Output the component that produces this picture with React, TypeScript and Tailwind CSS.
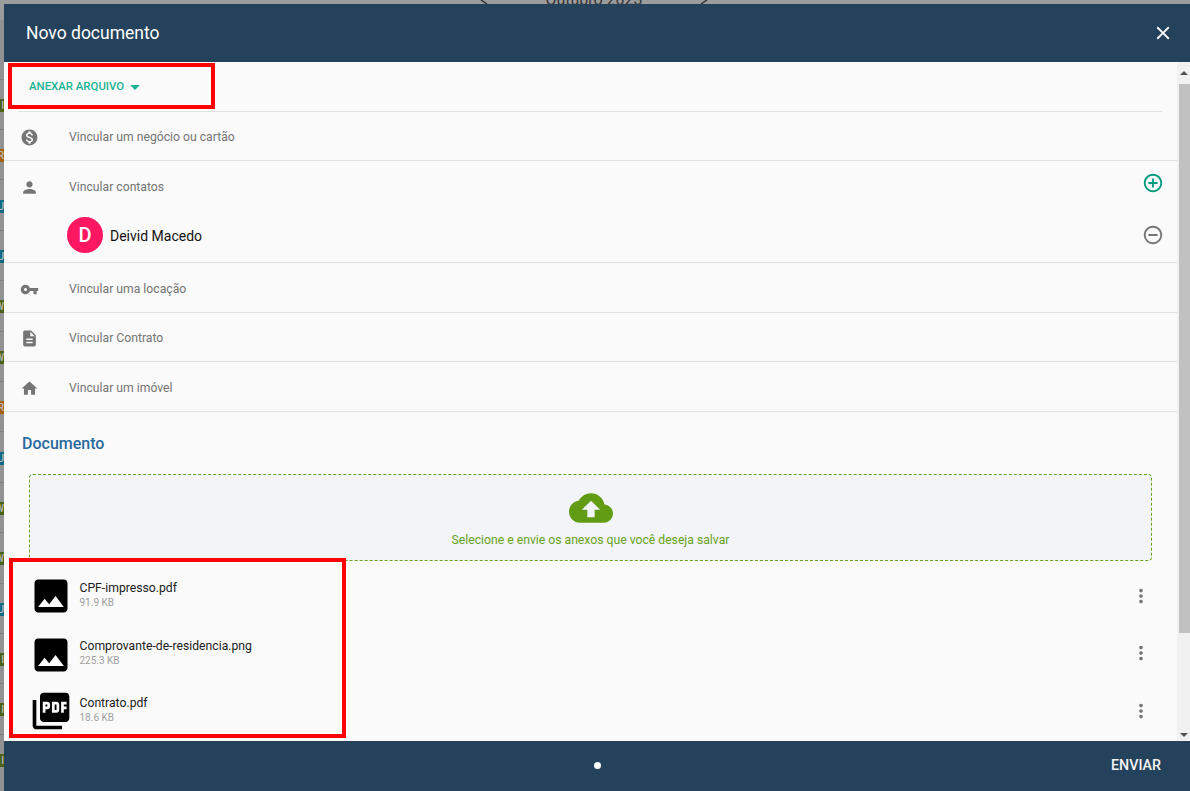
const Mi = ({ d, className }: { d: string; className?: string }) => (
  <svg viewBox="0 0 24 24" fill="currentColor" className={className}>
    <path d={d} />
  </svg>
);

const ICONS = {
  money:
    "M12 2C6.48 2 2 6.48 2 12s4.48 10 10 10 10-4.48 10-10S17.52 2 12 2zm1.41 16.09V20h-2.67v-1.93c-1.71-.36-3.16-1.46-3.27-3.4h1.96c.1 1.05.82 1.87 2.65 1.87 1.96 0 2.4-.98 2.4-1.59 0-.83-.44-1.61-2.67-2.14-2.48-.6-4.18-1.62-4.18-3.67 0-1.72 1.39-2.84 3.11-3.21V4h2.67v1.95c1.86.45 2.79 1.86 2.85 3.39H14.3c-.05-1.11-.64-1.87-2.22-1.87-1.5 0-2.4.68-2.4 1.64 0 .84.65 1.39 2.67 1.91s4.18 1.39 4.18 3.91c-.01 1.83-1.38 2.83-3.12 3.16z",
  person:
    "M12 12c2.21 0 4-1.79 4-4s-1.79-4-4-4-4 1.79-4 4 1.79 4 4 4zm0 2c-2.67 0-8 1.34-8 4v2h16v-2c0-2.66-5.33-4-8-4z",
  key: "M12.65 10C11.83 7.67 9.61 6 7 6c-3.31 0-6 2.69-6 6s2.69 6 6 6c2.61 0 4.83-1.67 5.65-4H17v4h4v-4h2v-4H12.65zM7 14c-1.1 0-2-.9-2-2s.9-2 2-2 2 .9 2 2-.9 2-2 2z",
  doc: "M14 2H6c-1.1 0-1.99.9-1.99 2L4 20c0 1.1.89 2 1.99 2H18c1.1 0 2-.9 2-2V8l-6-6zm2 16H8v-2h8v2zm0-4H8v-2h8v2zm-3-5V3.5L18.5 9H13z",
  home: "M10 20v-6h4v6h5v-8h3L12 3 2 12h3v8z",
  add: "M13 7h-2v4H7v2h4v4h2v-4h4v-2h-4V7zm-1-5C6.48 2 2 6.48 2 12s4.48 10 10 10 10-4.48 10-10S17.52 2 12 2zm0 18c-4.41 0-8-3.59-8-8s3.59-8 8-8 8 3.59 8 8-3.59 8-8 8z",
  remove:
    "M7 11v2h10v-2H7zm5-9C6.48 2 2 6.48 2 12s4.48 10 10 10 10-4.48 10-10S17.52 2 12 2zm0 18c-4.41 0-8-3.59-8-8s3.59-8 8-8 8 3.59 8 8-3.59 8-8 8z",
  image:
    "M21 19V5c0-1.1-.9-2-2-2H5c-1.1 0-2 .9-2 2v14c0 1.1.9 2 2 2h14c1.1 0 2-.9 2-2zM8.5 13.5l2.5 3.01L14.5 12l4.5 6H5l3.5-4.5z",
  pdf: "M20 2H8c-1.1 0-2 .9-2 2v12c0 1.1.9 2 2 2h12c1.1 0 2-.9 2-2V4c0-1.1-.9-2-2-2zm-8.5 7.5c0 .83-.67 1.5-1.5 1.5H9v2H7.5V7H10c.83 0 1.5.67 1.5 1.5v1zm5 2c0 .83-.67 1.5-1.5 1.5h-2.5V7H15c.83 0 1.5.67 1.5 1.5v3zm4-3H19v1h1.5V11H19v2h-1.5V7h3v1.5zM9 9.5h1v-1H9v1zM4 6H2v14c0 1.1.9 2 2 2h14v-2H4V6zm10 5.5h1v-3h-1v3z",
  more: "M12 8c1.1 0 2-.9 2-2s-.9-2-2-2-2 .9-2 2 .9 2 2 2zm0 2c-1.1 0-2 .9-2 2s.9 2 2 2 2-.9 2-2-.9-2-2-2zm0 6c-1.1 0-2 .9-2 2s.9 2 2 2 2-.9 2-2-.9-2-2-2z",
  close:
    "M19 6.41L17.59 5 12 10.59 6.41 5 5 6.41 10.59 12 5 17.59 6.41 19 12 13.41 17.59 19 19 17.59 13.41 12z",
  cloud:
    "M19.35 10.04C18.67 6.59 15.64 4 12 4 9.11 4 6.6 5.64 5.35 8.04 2.34 8.36 0 10.91 0 14c0 3.31 2.69 6 6 6h13c2.76 0 5-2.24 5-5 0-2.64-2.05-4.78-4.65-4.96zM14 13v4h-4v-4H7l5-5 5 5h-3z",
};

// rows of the calendar that sits behind the dialog, only their left edge shows
const STRIP = [
  { y: 99, letter: "I", color: "bg-[#4a6316]" },
  { y: 149, letter: "R", color: "bg-[#a5620f]" },
  { y: 200, letter: "U", color: "bg-[#0b6a85]" },
  { y: 250, letter: "U", color: "bg-[#0b6a85]" },
  { y: 300, letter: "W", color: "bg-[#4a6316]" },
  { y: 351, letter: "W", color: "bg-[#4a6316]" },
  { y: 401, letter: "R", color: "bg-[#a5620f]" },
  { y: 452, letter: "U", color: "bg-[#0b6a85]" },
  { y: 502, letter: "W", color: "bg-[#4a6316]" },
  { y: 552, letter: "W", color: "bg-[#4a6316]" },
  { y: 603, letter: "U", color: "bg-[#0b6a85]" },
  { y: 653, letter: "I", color: "bg-[#4a6316]" },
  { y: 703, letter: "I", color: "bg-[#4a6316]" },
  { y: 754, letter: "I", color: "bg-[#4a6316]" },
];
const STRIP_LINES = [79, 129, 179, 230, 280, 331, 381, 431, 482, 532, 583, 633, 683, 734];

const LinkRow = ({ icon, label, height, shift }: { icon: string; label: string; height: string; shift: string }) => (
  <div className={`flex items-center border-b border-[#e2e2e2] pl-[16px] ${shift} ${height}`}>
    <Mi d={icon} className="h-[19px] w-[19px] text-[#757575]" />
    <span className="ml-[30px] text-[12.2px] text-[#757575]">{label}</span>
  </div>
);

const FileRow = ({ icon, name, size, iconShift }: { icon: string; name: string; size: string; iconShift?: string }) => (
  <div className="flex h-[57.5px] items-center pr-[7px]">
    <div className={`flex w-[57.5px] shrink-0 pl-[7px] ${iconShift ?? ""}`}>
      <Mi d={icon} className="h-[44px] w-[44px] shrink-0 text-black" />
    </div>
    <div className="flex-1">
      <div className="text-[12.2px] leading-[15px] text-[#212121]">{name}</div>
      <div className="text-[10px] leading-[14px] text-[#9e9e9e]">{size}</div>
    </div>
    <Mi d={ICONS.more} className="h-[22px] w-[22px] text-[#757575]" />
  </div>
);

export default function App() {
  return (
    <div className="relative h-[791px] w-[1190px] overflow-hidden bg-[#9c9c9c] font-['Roboto',sans-serif]">
      {/* page behind the dialog */}
      <div className="absolute left-[480px] top-[-12px] flex w-[228px] items-center justify-center text-[16px] text-[#333]">
        <span>Outubro 2023</span>
      </div>
      <svg viewBox="0 0 228 4" className="absolute left-[480px] top-0 h-[4px] w-[228px] text-[#333]" fill="none" stroke="currentColor" strokeWidth="1.5">
        <path d="M1 0l6 4M227 0l-6 4" />
      </svg>
      <div className="absolute bottom-0 left-0 top-[20px] w-[4px] bg-[#929292]" />
      {STRIP_LINES.map((y) => (
        <div key={y} className="absolute left-0 h-px w-[4px] bg-[#7f7f7f]" style={{ top: y }} />
      ))}
      {STRIP.map((m) => (
        <div
          key={m.y}
          className={`absolute left-0 flex h-[13px] w-[4px] items-center justify-end overflow-hidden text-[10px] font-medium leading-none text-[#b9b9b9] ${m.color}`}
          style={{ top: m.y }}
        >
          <span className="shrink-0">{m.letter}</span>
        </div>
      ))}

      {/* dialog */}
      <div className="absolute left-[4px] top-[4px] flex h-[787px] w-[1186px] flex-col bg-[#fafafa]">
        <div className="flex h-[58px] shrink-0 items-center justify-between bg-[#24425c] pl-[22px] pr-[16px] text-white">
          <span className="text-[17.5px]">Novo documento</span>
          <Mi d={ICONS.close} className="h-[22px] w-[22px]" />
        </div>

        <div className="flex min-h-0 flex-1">
          <div className="min-w-0 flex-1 overflow-hidden">
            <div className="ml-[14px] mr-[15px] flex h-[50px] items-center border-b border-[#e2e2e2] pl-[11px]">
              <span className="text-[11.4px] font-medium text-[#1ab394]">ANEXAR ARQUIVO</span>
              <span className="ml-[6px] mt-[1px] h-0 w-0 border-x-[5px] border-t-[5px] border-x-transparent border-t-[#1ab394]" />
            </div>
            <LinkRow icon={ICONS.money} label="Vincular um negócio ou cartão" height="h-[49px]" shift="pt-[3px]" />
            <div className="border-b border-[#e2e2e2]">
              <div className="flex h-[50px] items-center pl-[16px] pr-[13px] pt-[2px]">
                <Mi d={ICONS.person} className="h-[19px] w-[19px] text-[#757575]" />
                <span className="ml-[30px] flex-1 text-[12.2px] text-[#757575]">Vincular contatos</span>
                <Mi d={ICONS.add} className="mb-[8px] h-[22px] w-[22px] text-[#009b7d]" />
              </div>
              <div className="flex h-[51px] items-center pb-[3px] pl-[63px] pr-[13px]">
                <div className="flex h-[36px] w-[36px] items-center justify-center rounded-full bg-[#ff1761] text-[20px] font-medium text-[#fff]">
                  D
                </div>
                <span className="ml-[7px] flex-1 pt-[2px] text-[14px] text-[#111]">Deivid Macedo</span>
                <Mi d={ICONS.remove} className="h-[22px] w-[22px] text-[#757575]" />
              </div>
            </div>
            <LinkRow icon={ICONS.key} label="Vincular uma locação" height="h-[50px]" shift="pt-[3px]" />
            <LinkRow icon={ICONS.doc} label="Vincular Contrato" height="h-[49px]" shift="pt-[3px]" />
            <LinkRow icon={ICONS.home} label="Vincular um imóvel" height="h-[50px]" shift="pt-[3px]" />

            <div className="px-[18px] pt-[22px]">
              <h2 className="text-[16px] font-medium leading-[19px] text-[#29699e]">Documento</h2>
              <div className="ml-[7px] mr-[7px] mt-[21px] flex h-[87px] flex-col items-center rounded-[4px] border border-dashed border-[#69a31a] bg-[#f2f4f8]">
                <Mi d={ICONS.cloud} className="mt-[11px] h-[44px] w-[44px] text-[#629c15]" />
                <span className="mt-[1px] text-[12.2px] text-[#69a31a]">Selecione e envie os anexos que você deseja salvar</span>
              </div>
              <div className="pt-[6px]">
                <FileRow icon={ICONS.image} name="CPF-impresso.pdf" size="91.9 KB" />
                <FileRow icon={ICONS.image} name="Comprovante-de-residencia.png" size="225.3 KB" iconShift="mt-[3px]" />
                <FileRow icon={ICONS.pdf} name="Contrato.pdf" size="18.6 KB" iconShift="mt-[1px]" />
              </div>
            </div>
          </div>

          {/* scrollbar */}
          <div className="flex w-[13px] shrink-0 flex-col bg-[#f1f1f1]">
            <div className="flex h-[22px] items-center justify-center">
              <span className="h-0 w-0 border-x-[4px] border-b-[4px] border-x-transparent border-b-[#505050]" />
            </div>
            <div className="ml-[2px] h-[549px] bg-[#c1c1c1]" />
            <div className="flex flex-1 items-end justify-center pb-[4px]">
              <span className="h-0 w-0 border-x-[4px] border-t-[4px] border-x-transparent border-t-[#505050]" />
            </div>
          </div>
        </div>

        <div className="relative flex h-[50px] shrink-0 items-center justify-end bg-[#24425c] pr-[29px]">
          <span className="absolute left-[590px] top-[21px] h-[7px] w-[7px] rounded-full bg-white" />
          <span className="text-[14.25px] font-medium text-[#f5f5f5]">ENVIAR</span>
        </div>
      </div>

      {/* annotation boxes */}
      <div className="absolute left-[8px] top-[63px] h-[46px] w-[207px] border-4 border-[#ff0000]" />
      <div className="absolute left-[9px] top-[558px] h-[180px] w-[337px] border-4 border-[#ff0000]" />
    </div>
  );
}
